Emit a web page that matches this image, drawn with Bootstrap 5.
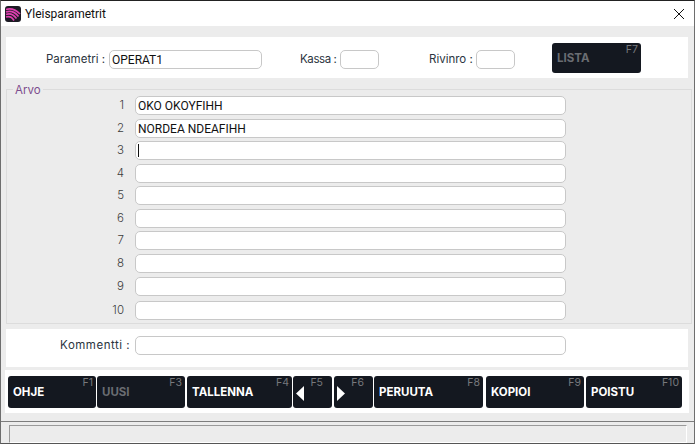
<!DOCTYPE html>
<html lang="fi"><head><meta charset="utf-8"><title>Yleisparametrit</title>
<link href="https://cdn.jsdelivr.net/npm/bootstrap@5.3.0/dist/css/bootstrap.min.css" rel="stylesheet">
<style>
html,body{width:695px;height:444px;overflow:hidden;margin:0;background:#ececec}
.win{width:695px;height:444px;border:1px solid #6e6e6e;border-top:1px solid #222;border-bottom:1px solid #555;background:#ececec;font-family:"Inter","Noto Sans",sans-serif;font-size:11.5px;color:#2b3440}
.tbar{height:25px;background:#fff;padding-left:4px;gap:4px;font:12px "Roboto",sans-serif;color:#111}
.tclose{margin-left:auto;width:30px;height:25px}
.panel{background:#fff}
.ptop{margin:11px 6px 0 5px;height:41px;padding-top:3px}
.fld{height:19px;border:1px solid #c8c8c8;border-radius:5px;background:#fff;font:12px "Roboto",sans-serif;color:#111;padding:0 2px;line-height:18px;white-space:nowrap;overflow:hidden}
.lab{line-height:19px;white-space:nowrap}
.l1{margin-left:36px;width:63px;text-align:right}.f1{width:153px;margin-left:4px}
.l2{margin-left:38px;width:35px;letter-spacing:-.4px}.f2{width:39px;margin-left:5px}
.l3{margin-left:50px;width:44px}.f3{width:39px;margin-left:3px}
.kbtn{position:relative;background:#141820;color:#fff;border-radius:3px;height:32px;font-weight:700;font-size:11.5px;line-height:32px;padding-left:5px;flex:none;font-family:"Inter",sans-serif}
.kbtn.off{color:#6a6d72}
.kbtn .fk{position:absolute;top:1px;right:3px;font-size:10.5px;line-height:12px;font-weight:400;color:#77797d}
.kbtn .fkm{right:9px}
.lst{width:89px;height:30px;margin:-2px 0 0 37px;line-height:31px}
.arvo{position:relative;margin:11px 2px 0 5px;height:235px;border:1px solid #dcdcdc;padding:6px 0 0}
.atitle{position:absolute;top:-6px;left:6px;background:#ececec;padding:0 2px;color:#7c4d8e;line-height:12px;font-size:11.5px}
.arow{height:19px;margin-bottom:3.5px}
.arow.r8{margin-bottom:4px}
.arow.r9{margin-bottom:5px}
.num{width:117px;text-align:right;line-height:19px;color:#3c3c3c;font-weight:300}
.vf{width:431px;margin-left:11px}
.caret{display:inline-block;width:1px;height:13px;background:#111;vertical-align:-2px}
.pkom{margin:5px 6px 0 5px;height:38px;padding-top:7px}
.pkom .lab{width:124px;text-align:right;letter-spacing:.5px}
.pkom .vf{margin-left:5px}
.pbtn{margin:3px 5px 0 4px;height:43px;padding:6px 0 0 3px;gap:1px}
.pbtn .w1{width:88px}.w2{width:88px}.w3{width:105px;margin-left:1px}.w4{width:39px}.w5{width:39px;margin-left:1px}.w6{width:109px}.w7{width:98px;margin-left:2px}.w8{width:96px;margin-left:1px}
.arr{display:block;margin-top:10px;margin-left:-2px}
.sep{height:1px;background:#7d7d7d;margin-top:8px}
.stat{margin:3px 7px 0 8px;height:18px;border:1px solid #fff;border-top:1px solid #9a9a9a;border-left:1px solid #9a9a9a}
</style></head><body>
<div class="win d-flex flex-column">
 <div class="tbar d-flex align-items-center">
  <svg width="16" height="16" viewBox="0 0 16 16"><rect width="16" height="16" rx="3" fill="#1c1a24"/><path d="M1 3.500C6 2 11 4 15 8M1 6C6 4.500 10 6 13.500 10.500M1 8.500C5 7 8.500 8.500 11.500 12.500M1 11C4.500 10 7 11 9 14.500" stroke="#e040b0" stroke-width="1.700" fill="none"/></svg>
  <span>Yleisparametrit</span>
  <span class="tclose d-flex align-items-center justify-content-center"><svg width="12" height="12" viewBox="0 0 12 12"><path d="M1 1L11 11M11 1L1 11" stroke="#111" stroke-width="1"/></svg></span>
 </div>
 <div class="panel ptop d-flex align-items-center">
  <div class="lab l1">Parametri :</div><div class="fld f1">OPERAT1</div>
  <div class="lab l2">Kassa :</div><div class="fld f2"></div>
  <div class="lab l3">Rivinro :</div><div class="fld f3"></div>
  <div class="kbtn off lst">LISTA<span class="fk">F7</span></div>
 </div>
 <div class="arvo">
  <div class="atitle">Arvo</div>
  <div class="arow d-flex"><div class="num">1</div><div class="fld vf">OKO OKOYFIHH</div></div>
  <div class="arow d-flex"><div class="num">2</div><div class="fld vf">NORDEA NDEAFIHH</div></div>
  <div class="arow d-flex"><div class="num">3</div><div class="fld vf"><span class="caret"></span></div></div>
  <div class="arow d-flex"><div class="num">4</div><div class="fld vf"></div></div>
  <div class="arow d-flex"><div class="num">5</div><div class="fld vf"></div></div>
  <div class="arow d-flex"><div class="num">6</div><div class="fld vf"></div></div>
  <div class="arow d-flex"><div class="num">7</div><div class="fld vf"></div></div>
  <div class="arow r8 d-flex"><div class="num">8</div><div class="fld vf"></div></div>
  <div class="arow r9 d-flex"><div class="num">9</div><div class="fld vf"></div></div>
  <div class="arow d-flex"><div class="num">10</div><div class="fld vf"></div></div>
 </div>
 <div class="panel pkom d-flex"><div class="lab">Kommentti :</div><div class="fld vf"></div></div>
 <div class="panel pbtn d-flex">
  <div class="kbtn w1">OHJE<span class="fk">F1</span></div>
  <div class="kbtn off w2">UUSI<span class="fk">F3</span></div>
  <div class="kbtn w3">TALLENNA<span class="fk">F4</span></div>
  <div class="kbtn w4"><svg class="arr" width="8" height="15" viewBox="0 0 8 15"><path d="M8 0V15L0 7.500Z" fill="#fff"/></svg><span class="fk fkm">F5</span></div>
  <div class="kbtn w5"><svg class="arr" width="8" height="15" viewBox="0 0 8 15"><path d="M0 0V15L8 7.500Z" fill="#fff"/></svg><span class="fk fkm">F6</span></div>
  <div class="kbtn w6">PERUUTA<span class="fk">F8</span></div>
  <div class="kbtn w7">KOPIOI<span class="fk">F9</span></div>
  <div class="kbtn w8">POISTU<span class="fk">F10</span></div>
 </div>
 <div class="sep"></div>
 <div class="stat"></div>
</div>
<script src="https://cdn.jsdelivr.net/npm/bootstrap@5.3.0/dist/js/bootstrap.bundle.min.js"></script>
</body></html>
